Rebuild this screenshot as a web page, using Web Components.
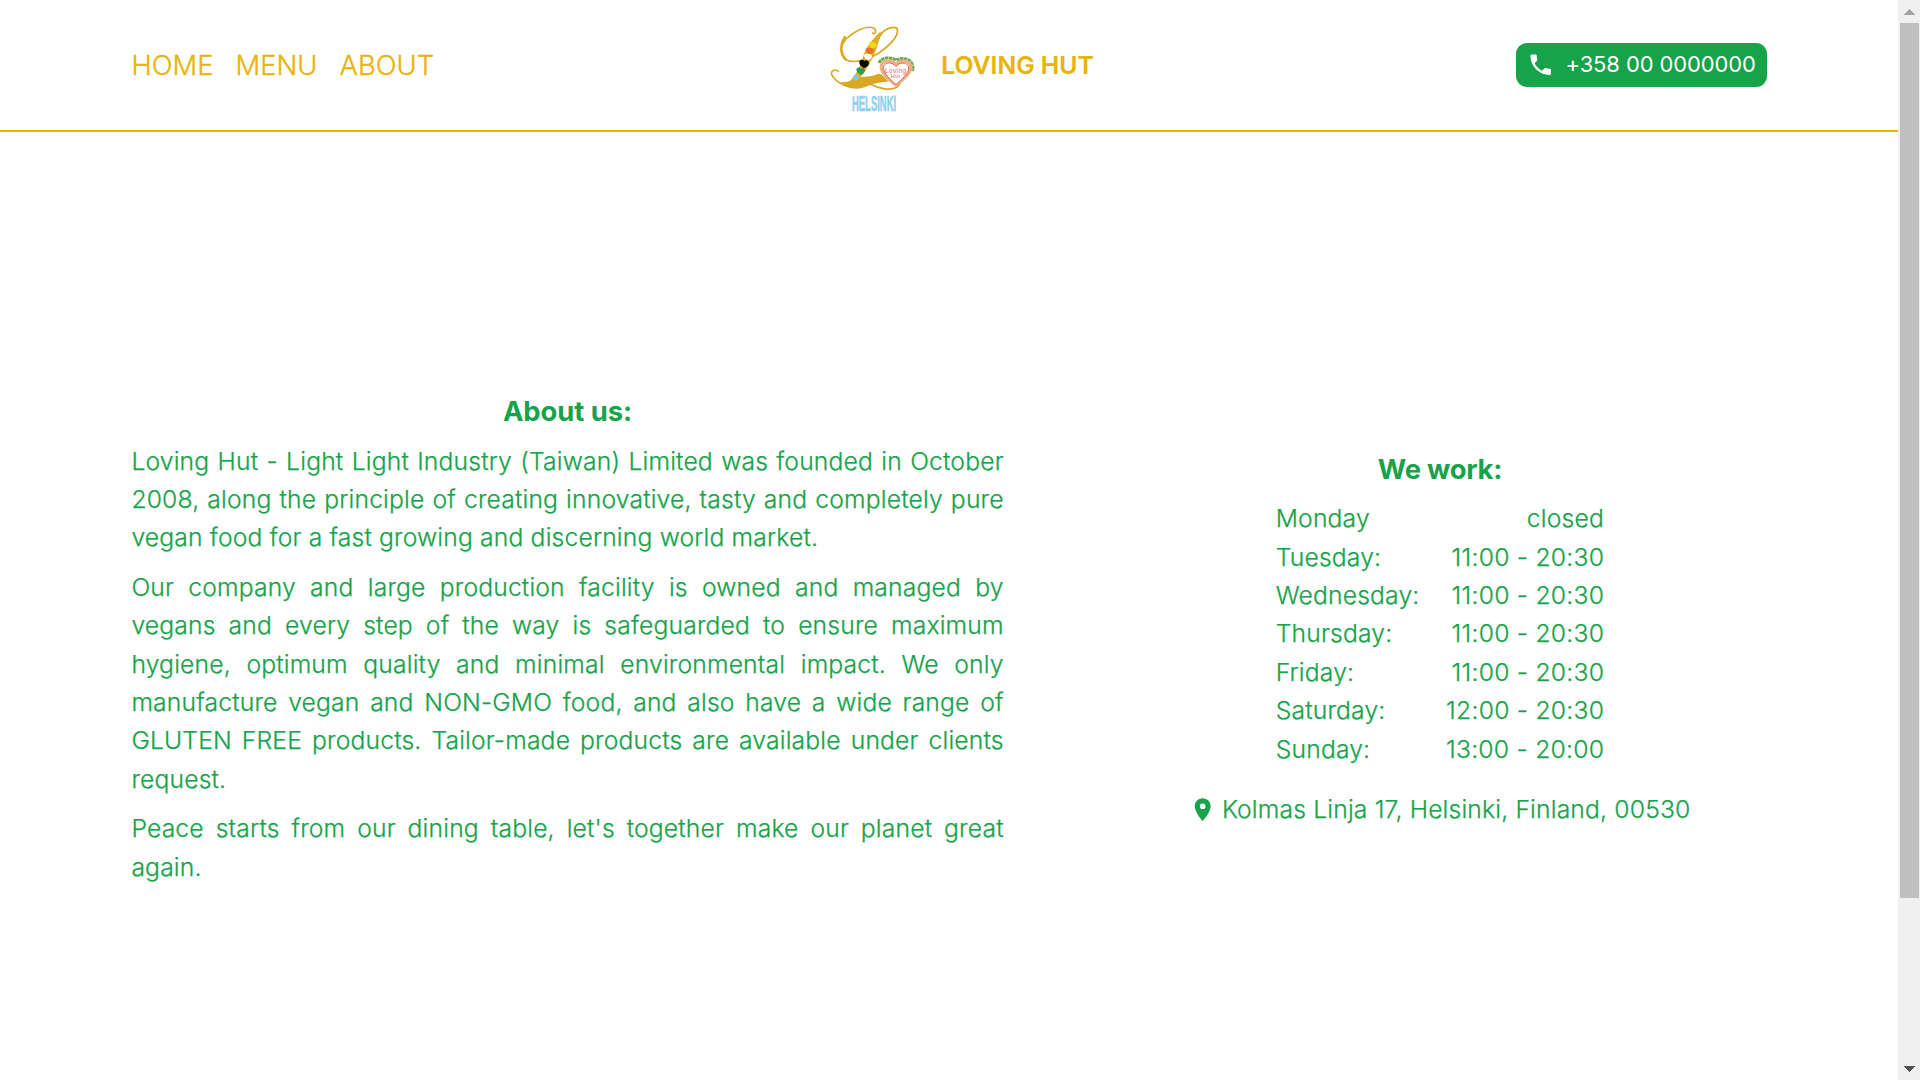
<!DOCTYPE html>
<html lang="en">
<head>
<meta charset="utf-8">
<title>Loving Hut Helsinki</title>
<style>
  :root { --u: 1.3714px; --gold: #eab308; --green: #16a34a; }
  html, body { margin: 0; height: 100%; overflow: hidden; background: #fff; }
  body { font-family: Inter, "Liberation Sans", sans-serif; font-weight: 300; font-size: calc(18 * var(--u)); line-height: calc(28 * var(--u)); color: var(--green); }
</style>
</head>
<body>
<app-shell>
  <site-header slot="header">
    <nav-link slot="nav">HOME</nav-link><nav-link slot="nav">MENU</nav-link><nav-link slot="nav">ABOUT</nav-link>
    <brand-mark slot="brand">LOVING HUT</brand-mark>
    <phone-button slot="action">+358 00 0000000</phone-button>
  </site-header>
  <about-section>
    <span slot="title">About us:</span>
    <p slot="text">Loving Hut - Light Light Industry (Taiwan) Limited was founded in October 2008, along the principle of creating innovative, tasty and completely pure vegan food for a fast growing and discerning world market.</p>
    <p slot="text">Our company and large production facility is owned and managed by vegans and every step of the way is safeguarded to ensure maximum hygiene, optimum quality and minimal environmental impact. We only manufacture vegan and NON-GMO food, and also have a wide range of GLUTEN FREE products. Tailor-made products are available under clients request.</p>
    <p slot="text">Peace starts from our dining table, let's together make our planet great again.</p>
    <opening-hours slot="side">
      <span slot="title">We work:</span>
      <hours-row day="Monday" time="closed"></hours-row>
      <hours-row day="Tuesday:" time="11:00 - 20:30"></hours-row>
      <hours-row day="Wednesday:" time="11:00 - 20:30"></hours-row>
      <hours-row day="Thursday:" time="11:00 - 20:30"></hours-row>
      <hours-row day="Friday:" time="11:00 - 20:30"></hours-row>
      <hours-row day="Saturday:" time="12:00 - 20:30"></hours-row>
      <hours-row day="Sunday:" time="13:00 - 20:00"></hours-row>
      <map-address slot="address">Kolmas Linja 17, Helsinki, Finland, 00530</map-address>
    </opening-hours>
  </about-section>
</app-shell>
<script>
const define = (name, html) => customElements.define(name, class extends HTMLElement {
  constructor() {
    super();
    const t = document.createElement('template');
    t.innerHTML = html;
    this.attachShadow({ mode: 'open' }).append(t.content.cloneNode(true));
  }
  connectedCallback() {
    this.shadowRoot.querySelectorAll('[data-attr]').forEach(n => { n.textContent = this.getAttribute(n.dataset.attr) || ''; });
  }
});

define('app-shell', `
<style>
  :host { display: flex; height: 100vh; overflow: hidden; }
  main { flex: 1; min-width: 0; }
</style>
<main><slot name="header"></slot><slot></slot></main>
<scroll-bar></scroll-bar>`);

define('scroll-bar', `
<style>
  :host { display: flex; flex-direction: column; width: 22px; height: 100%; background: #f0f0f0; flex: none; }
  .btn { height: 23px; flex: none; }
  .track { flex: 1; }
  .thumb { margin-left: 2px; width: 19px; height: 875px; background: #c0c0c0; }
  svg { display: block; width: 22px; height: 23px; }
</style>
<div class="btn"><svg viewBox="0 0 22 23" shape-rendering="crispEdges"><path d="M6 15h11l-5.500-6z" fill="#a3a3a3"/></svg></div>
<div class="track"><div class="thumb"></div></div>
<div class="btn"><svg viewBox="0 0 22 23" shape-rendering="crispEdges"><path d="M6 9h11l-5.500 6z" fill="#505050"/></svg></div>`);

define('site-header', `
<style>
  :host { display: flex; align-items: center; box-sizing: border-box; height: 132px; padding: 0 131.4px; border-bottom: 2px solid var(--gold); }
  nav { flex: 1; display: flex; gap: 22px; }
  .end { flex: 1; display: flex; justify-content: flex-end; }
  ::slotted(brand-mark) { margin-left: 25px; }
</style>
<nav><slot name="nav"></slot></nav>
<slot name="brand"></slot>
<div class="end"><slot name="action"></slot></div>`);

define('nav-link', `
<style>
  :host { display: block; color: var(--gold); font-size: calc(20 * var(--u)); -webkit-text-stroke: .3px currentColor; }
</style>
<slot></slot>`);

define('brand-mark', `
<style>
  :host { display: flex; align-items: center; gap: 24px; color: var(--gold); font-weight: 600; -webkit-text-stroke: .2px currentColor; }
</style>
<brand-logo></brand-logo><span><slot></slot></span>`);

define('brand-logo', `
<style>
  :host { display: block; width: 88px; height: 92px; margin-top: 7px; -webkit-text-stroke: 0; }
  svg { display: block; width: 88px; height: 92px; overflow: visible; }
</style>
<svg viewBox="9 3 88 92">
  <g fill="none" stroke="#dba81f" stroke-linecap="round" stroke-linejoin="round">
    <path d="M52.500 13C55 15.500 57.500 10 53.500 8C46 5 33 12 26 19C20 26 19.500 35 26 40C36 44 49 39 59 33C70 25 78 16 77.500 10C76.500 5.500 67 7 62 13C57 20 54 29 50 37" stroke-width="1.700"/>
    <path d="M25 17C20 24 20 33 25.500 39" stroke-width="2.400"/>
    <path d="M18.500 51.500C16 49 11 50 11.500 54C13 59 20 65 30 67" stroke-width="1.500"/>
    <path d="M50 64C59 69 71 71 77 67C79 65.500 80 64 80 62" stroke-width="1.800"/>
  </g>
  <path d="M62 13C58 20 57 31 51 41C46 51 40 59 33 64L30 61C37 54 41 44 44 34C47 25 53 19 60 12Z" fill="#dfac22"/>
  <path d="M20 62C27 63 33 60 38 58C43 55.500 51 58 58 53.500C63 54 65 59 69 61.500C62 62 55 62.500 48 66C39 70 27 70 20 62Z" fill="#d9a721"/>
  <g stroke="none">
    <path d="M53 22.500c-2-2-5 0-4 2.500c.5 1.500 2 3 3.500 3.500c2.500-.5 4-1.500 4-3.500s-2.500-3.500-3.500-2.500z" fill="#f8d60c"/>
    <path d="M50 28.500c-2-2-5 0-4 2c.5 1.500 2 3 3.500 3.500c2.500-.5 4-1.500 4-3.500s-2.500-3-3.500-2z" fill="#ee6b2c"/>
    <path d="M48.500 34.500c-2-2-5.500 0-4.500 2c.5 1.500 2.500 3 4 3.500c2.500-.5 4-1.500 4-3.500s-2.500-3-3.500-2z" fill="#fff"/>
    <path d="M44.500 41c-2-2.500-6-.5-5 2.500c.5 2 2.500 3.500 4.500 4.500c3-1 5-2.500 5-5s-3.500-3.500-4.500-2z" fill="#050505"/>
    <path d="M41 48.500c-2-2-5.500-.5-4.500 2c.5 1.500 2.500 3.500 4 4.500c3-1.500 4.500-2.500 4.500-4.500s-3-3.500-4-2z" fill="#2f9d50"/>
    <path d="M36 55c-1.500-1-3.500 1.500-2.500 3c.5 1.500 1 2 1.500 2.500c2-.5 4-1.500 4-3s-2-3.500-3-2.500z" fill="#79cdec"/>
  </g>
  <path d="M59 43C61 38 69 36 76 40C83 37 91 39 92.500 45C93.200 47.500 93 49.500 92.500 51" fill="none" stroke="#6aa850" stroke-width="3" stroke-dasharray="3.400 .5"/>
  <path d="M76 65C65 57 60 50 61.500 45C64 39.500 72 40 76 44.500C80 40 88 40 90.500 45C92.500 51 86 57 76 65Z" fill="#fff" stroke="#f0ac82" stroke-width="3.200"/>
  <path d="M76 64.500C67 57 62.500 51 63.500 46.500C65.500 41.500 72.500 42 76 46.500C79 42 86.500 42 88.500 46.500C90 51 85 57 76 64.500Z" fill="#fff" stroke="#d9684a" stroke-width="1"/>
  <g font-family="Liberation Sans, sans-serif" fill="#dc6a58" text-anchor="middle" font-weight="400">
    <text x="75.500" y="53" font-size="6.500" textLength="21">Loving</text>
    <text x="75.500" y="58" font-size="6" textLength="10">Hut</text>
  </g>
  <text transform="translate(32 91) scale(.45 1)" textLength="98" lengthAdjust="spacingAndGlyphs" font-family="Liberation Sans, sans-serif" font-weight="700" font-size="21.500" fill="#8fd0f2" stroke="#8fd0f2" stroke-width=".6">HELSINKI</text>
</svg>`);

define('phone-button', `
<style>
  :host { display: flex; align-items: center; gap: 11px; box-sizing: border-box; height: 44px; padding: 0 11px; border-radius: 11px; background: var(--green); color: #fff; font-size: calc(16 * var(--u)); font-weight: 400; line-height: 33px; letter-spacing: -.1px; }
  svg { width: 27.4px; height: 27.4px; display: block; flex: none; }
  span { white-space: nowrap; padding-bottom: 2px; }
</style>
<svg viewBox="0 0 24 24" fill="currentColor"><path d="M6.620 10.790c1.440 2.830 3.760 5.140 6.590 6.590l2.200-2.200c.27-.27.67-.36 1.020-.24 1.120.37 2.330.57 3.570.57.55 0 1 .45 1 1V20c0 .55-.45 1-1 1-9.390 0-17-7.610-17-17 0-.55.45-1 1-1h3.500c.55 0 1 .45 1 1 0 1.250.2 2.450.57 3.570.11.35.03.74-.25 1.020l-2.200 2.200z"/></svg>
<span><slot></slot></span>`);

define('section-title', `
<style>
  :host { display: block; font-size: calc(20 * var(--u)); font-weight: 700; text-align: center; letter-spacing: -.05px; -webkit-text-stroke: 0; }
</style>
<slot></slot>`);

define('about-section', `
<style>
  :host { display: flex; align-items: center; gap: 109.7px; padding: 260.2px 131.4px 0; letter-spacing: .17px; -webkit-text-stroke: .25px currentColor; }
  .text { width: 872.3px; flex: none; display: flex; flex-direction: column; gap: 11px; }
  .side { flex: 1; display: flex; justify-content: center; }
  ::slotted(p) { margin: 0; text-align: justify; }
</style>
<div class="text"><section-title><slot name="title"></slot></section-title><slot name="text"></slot></div>
<div class="side"><slot name="side"></slot></div>`);

define('opening-hours', `
<style>
  :host { display: flex; flex-direction: column; align-items: center; }
  .rows { width: 328.5px; margin: 11px 0 22px; }
  section-title { letter-spacing: -.25px; }
</style>
<section-title><slot name="title"></slot></section-title>
<div class="rows"><slot></slot></div>
<slot name="address"></slot>`);

define('hours-row', `
<style>
  :host { display: flex; justify-content: space-between; }
  span + span { letter-spacing: .25px; }
</style>
<span data-attr="day"></span><span data-attr="time"></span>`);

define('map-address', `
<style>
  :host { display: flex; align-items: center; gap: 5px; white-space: nowrap; }
  svg { width: 27.4px; height: 27.4px; display: block; flex: none; }
</style>
<svg viewBox="0 0 24 24" fill="currentColor"><path d="M12 2C8.130 2 5 5.130 5 9c0 5.250 7 13 7 13s7-7.750 7-13c0-3.870-3.130-7-7-7zm0 9.500a2.500 2.500 0 1 1 0-5 2.500 2.500 0 0 1 0 5z"/></svg>
<span><slot></slot></span>`);
</script>
</body>
</html>
